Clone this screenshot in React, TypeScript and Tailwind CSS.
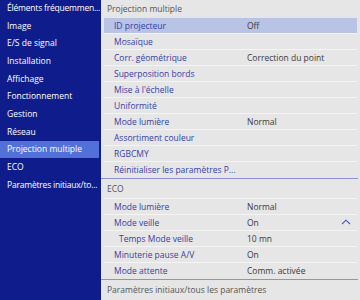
import React from "react";

const leftItems = [
  "Éléments fréquemmen...",
  "Image",
  "E/S de signal",
  "Installation",
  "Affichage",
  "Fonctionnement",
  "Gestion",
  "Réseau",
  "Projection multiple",
  "ECO",
  "Paramètres initiaux/to...",
];

type Row = { label: string; value?: string; indent?: boolean; active?: boolean; chevron?: boolean };

const multi: Row[] = [
  { label: "ID projecteur", value: "Off", active: true },
  { label: "Mosaïque" },
  { label: "Corr. géométrique", value: "Correction du point" },
  { label: "Superposition bords" },
  { label: "Mise à l'échelle" },
  { label: "Uniformité" },
  { label: "Mode lumière", value: "Normal" },
  { label: "Assortiment couleur" },
  { label: "RGBCMY" },
  { label: "Réinitialiser les paramètres P..." },
];

const eco: Row[] = [
  { label: "Mode lumière", value: "Normal" },
  { label: "Mode veille", value: "On", chevron: true },
  { label: "Temps Mode veille", value: "10 mn", indent: true },
  { label: "Minuterie pause A/V", value: "On" },
  { label: "Mode attente", value: "Comm. activée" },
];

function RowView({ r, last }: { r: Row; last?: boolean }) {
  return (
    <div
      className={
        "relative flex h-[16px] items-center " +
        (r.active ? "bg-[#b9c3e6] " : "") +
        (last ? "" : "border-b border-[#f4f4f4]")
      }
    >
      <div className={"w-[143px] shrink-0 whitespace-nowrap text-[#3440a4] " + (r.indent ? "pl-[15px]" : "pl-[10px]")}>
        {r.label}
      </div>
      {r.value && <div className="whitespace-nowrap text-[#3a3a3a]">{r.value}</div>}
      {r.chevron && (
        <svg className="absolute right-[6px] top-[4px]" width="10" height="6" viewBox="0 0 10 6">
          <path d="M1 5 L5 1.2 L9 5" fill="none" stroke="#4a58b8" strokeWidth="1.1" />
        </svg>
      )}
    </div>
  );
}

export default function App() {
  return (
    <div
      className="flex h-[300px] w-[360px] overflow-hidden text-[8.5px] leading-[12px]"
      style={{ fontFamily: '"Open Sans", "Noto Sans", sans-serif' }}
    >
      <div className="w-[101px] shrink-0 bg-[#0f1d8c] text-white">
        <div className="mt-[-1px]">
          {leftItems.map((t) => (
            <div
              key={t}
              className={
                "flex h-[17.7px] items-center whitespace-nowrap pl-[7px] " +
                (t === "Projection multiple" ? "mr-[2px] bg-[#5171d9] " : "") +
                (t.endsWith("...") ? "tracking-[-0.2px]" : "")
              }
            >
              {t}
            </div>
          ))}
        </div>
      </div>
      <div className="flex flex-1 flex-col bg-[#e6e6e6] pl-[3px] pr-[3px]">
        <div className="flex h-[18px] items-center pl-[3px] text-[#555]">Projection multiple</div>
        {multi.map((r, i) => (
          <RowView key={r.label + i} r={r} last={i === multi.length - 1} />
        ))}
        <div className="-ml-[3px] -mr-[1px] h-[1px] bg-[#8a92d0]" />
        <div className="flex h-[20px] items-center border-b border-[#f4f4f4] pl-[3px] text-[#555]">ECO</div>
        {eco.map((r, i) => (
          <RowView key={r.label + i} r={r} last={i === eco.length - 1} />
        ))}
        <div className="-ml-[3px] -mr-[1px] h-[1px] bg-[#8a92d0]" />
        <div className="flex h-[20px] items-center pl-[3px] text-[#555]">Paramètres initiaux/tous les paramètres</div>
      </div>
    </div>
  );
}
